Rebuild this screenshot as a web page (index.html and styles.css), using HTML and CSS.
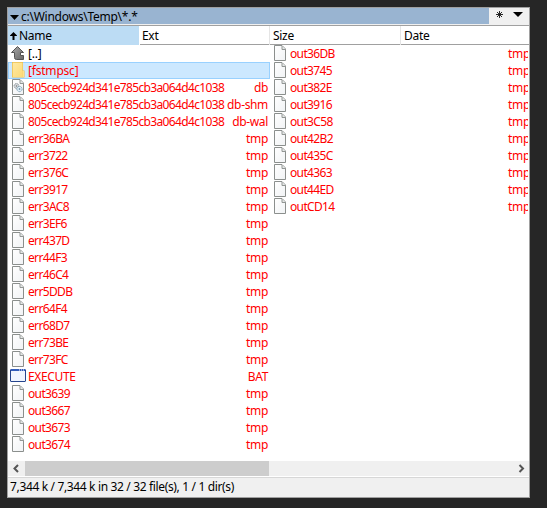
FILE: index.html
```html
<!DOCTYPE html>
<html lang="en">
<head>
<meta charset="utf-8">
<title>File panel</title>
<link rel="stylesheet" href="styles.css">
</head>
<body>
<svg class="defs" width="0" height="0">
  <defs>
    <linearGradient id="paper" x2="1" y2="1"><stop stop-color="#fff"/><stop offset="1" stop-color="#f1f3f5"/></linearGradient>
    <linearGradient id="metal" x2="1" y2="1"><stop stop-color="#aaa"/><stop offset="1" stop-color="#686868"/></linearGradient>
    <linearGradient id="manila" x2="1" y2="1"><stop stop-color="#ffe9a2"/><stop offset="1" stop-color="#fbda78"/></linearGradient>
    <symbol id="file" viewBox="0 0 16 17">
      <path d="M2.500 .5H10L13.500 4V15.500H2.500Z" fill="url(#paper)" stroke="#8b8f8d"/>
      <path d="M10 1V4.500H13.500" fill="#e5e8e7" stroke="#929694"/>
    </symbol>
    <symbol id="db" viewBox="0 0 16 17">
      <use href="#file" width="16" height="17"/>
      <circle cx="6.500" cy="7" r="2.400" fill="#d9dee2" stroke="#858d92" stroke-dasharray="1.200 .5"/>
      <circle cx="9.500" cy="10" r="2.600" fill="#e2f1fa" stroke="#7899ad" stroke-dasharray="1.200 .5"/>
      <circle cx="6.500" cy="7" r=".8" fill="#777"/><circle cx="9.500" cy="10" r=".9" fill="#7899ad"/>
    </symbol>
    <symbol id="up" viewBox="0 0 16 17">
      <path d="M7.500 1.500L13.500 7.500H10.500V10.500H13.500V14.500H6.500Q4.500 14.500 4.500 12.500V7.500H1.500Z" fill="url(#metal)" stroke="#555"/>
    </symbol>
    <symbol id="folder" viewBox="0 0 16 17">
      <path d="M2 0H13V8.500H14.500V15.500H2Z" fill="#e8bd4c"/>
      <path d="M2.700 .7H12.500V15H2.700Z" fill="url(#manila)"/>
      <path d="M12.500 9H14V15H12.500Z" fill="#ffe28b"/>
    </symbol>
    <symbol id="bat" viewBox="0 0 16 17">
      <rect x=".5" y="1.500" width="15" height="12" rx=".5" fill="#eff5ff" stroke="#26458e"/>
      <path d="M1 1H15V3H1Z" fill="#325dbb"/>
      <path d="M9 2h1M11 2h1M13 2h1" stroke="#fff"/>
    </symbol>
  </defs>
</svg>
<main class="panel">
  <div class="pathbar">
    <div class="path"><svg class="tri" width="9" height="5"><path d="M0 0H9L4.500 5Z"/></svg><span>c:\Windows\Temp\*.*</span></div>
    <div class="tools">
      <svg width="7" height="7"><path d="M3.500 0V7M0 3.500H7M1 1L6 6M6 1L1 6" stroke="#111" stroke-width=".9"/></svg>
      <svg width="10" height="5"><path d="M0 0H10L5 5Z"/></svg>
    </div>
  </div>
  <div class="header">
    <div class="head sorted"><svg width="7" height="8"><path d="M3.500 0L7 3.500V4H4.500V8H2.500V4H0V3.500Z"/></svg><span>Name</span></div>
    <div class="head extension">Ext</div>
    <div class="head">Size</div>
    <div class="head">Date</div>
  </div>
  <div class="files"><div class="column" id="left"></div><div class="column" id="right"></div></div>
  <div class="scrollbar">
    <svg width="17" height="15"><path d="M10 4L6.500 7.500L10 11" fill="none" stroke="#555" stroke-width="2"/></svg>
    <div class="track"><div class="thumb"></div></div>
    <svg width="17" height="15"><path d="M7.500 4L11 7.500L7.500 11" fill="none" stroke="#555" stroke-width="2"/></svg>
  </div>
  <div class="status"><span>7,344 k / 7,344 k in 32 / 32 file(s), 1 / 1 dir(s)</span></div>
</main>
<script src="files.js"></script>
</body>
</html>
```
FILE: styles.css
```css
* { box-sizing: border-box; }
body {
  margin: 0;
  padding: 7px;
  height: 508px;
  overflow: hidden;
  background: #262626;
  color: #000;
  font: 12px/17px "Noto Sans", "Open Sans", sans-serif;
  letter-spacing: -.35px;
}
svg { display: block; flex: none; }
.defs { position: absolute; }
.panel {
  width: 523px;
  height: 491px;
  border: 1px solid #a0a0a0;
  background: #fff;
  display: flex;
  flex-direction: column;
  overflow: hidden;
}
.pathbar { display: flex; height: 17px; background: #f0f0f0; flex: none; }
.path { display: flex; align-items: center; gap: 3px; width: 481px; height: 16px; padding-left: 2px; background: #99b4d1; white-space: pre; letter-spacing: -.25px; }
.path span { margin-left: -1px; }
.path .tri { margin-top: 2px; }
.tools { display: flex; align-items: center; gap: 10px; padding: 0 0 4px 7px; }
.header { display: grid; grid-template-columns: 131px 130px 131px 1fr; height: 20px; border-top: 1px solid #a0a0a0; border-bottom: 1px solid #a0a0a0; flex: none; line-height: 19px; }
.head { padding-left: 3px; border-left: 1px solid #e5e5e5; display: flex; align-items: center; letter-spacing: -.3px; }
.head.sorted { gap: 2px; padding-left: 2px; border: 0; background: #bcdcf4; }
.head.extension { padding-left: 2px; border-left-color: #fff; }
.files { display: flex; height: 416px; flex: none; overflow: hidden; margin-right: 1px; }
.column { width: 262px; flex: none; }
.row { display: flex; height: 17px; padding: 0 2px 0 2px; color: #f00; white-space: nowrap; }
.row svg { margin-right: 2px; }
.row.parent { color: #000; }
.row.selected { background: #cce8ff; box-shadow: inset 0 0 0 1px #99d1ff; }
.name { letter-spacing: -.65px; }
.parent .name, .selected .name { letter-spacing: -.2px; }
.program .name { letter-spacing: -.35px; }
.ext { margin-left: auto; }
.scrollbar { display: flex; height: 15px; background: #f0f0f0; flex: none; }
.track { flex: 1; }
.thumb { width: 244px; height: 15px; background: #cdcdcd; }
.status { flex: 1; margin-top: 1px; border-top: 1px solid #d7d7d7; background: #f0f0f0; padding-left: 2px; line-height: 18px; white-space: pre; }
```
FILE: files.js
```js
const hash = "805cecb924d341e785cb3a064d4c1038";
const tmp = names => names.split(" ").map(name => ["file", name, "tmp"]);
const left = [
  ["up", "[..]", "", "parent"],
  ["folder", "[fstmpsc]", "", "selected"],
  ["db", hash, "db"],
  ["file", hash, "db-shm"],
  ["file", hash, "db-wal"],
  ...tmp("err36BA err3722 err376C err3917 err3AC8 err3EF6 err437D err44F3 err46C4 err5DDB err64F4 err68D7 err73BE err73FC"),
  ["bat", "EXECUTE", "BAT", "program"],
  ...tmp("out3639 out3667 out3673 out3674")
];
const right = tmp("out36DB out3745 out382E out3916 out3C58 out42B2 out435C out4363 out44ED outCD14");
const render = (id, rows) => {
  document.getElementById(id).innerHTML = rows.map(([icon, name, ext, kind = ""]) =>
    `<div class="row ${kind}"><svg width="16" height="17"><use href="#${icon}"/></svg><span class="name">${name}</span><span class="ext">${ext}</span></div>`
  ).join("");
};
render("left", left);
render("right", right);
```
